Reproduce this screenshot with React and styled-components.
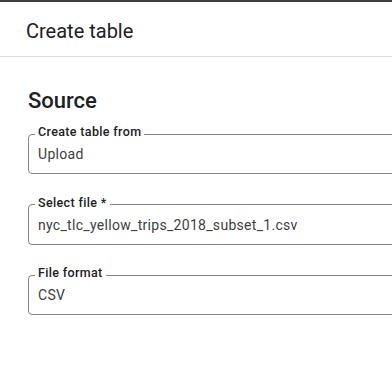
import React from "react";
import styled, { createGlobalStyle } from "styled-components";

const Global = createGlobalStyle`
  html, body { margin: 0; padding: 0; background: #fff; overflow: hidden; }
  body { font-family: Roboto, "Liberation Sans", Arial, sans-serif; }
`;

const Page = styled.div`
  width: 392px;
  height: 369px;
  border-top: 2px solid #3c4043;
  box-sizing: border-box;
  overflow: hidden;
`;

const Header = styled.header`
  padding: 17px 26px 13px;
  border-bottom: 1px solid #dadce0;
`;

const Title = styled.h1`
  margin: 0;
  font-size: 20px;
  line-height: 24px;
  font-weight: 400;
  color: #202124;
`;

const Body = styled.section`
  padding: 30px 0 0 28px;
`;

const SectionTitle = styled.h2`
  margin: 0 0 9px;
  font-size: 22px;
  line-height: 28px;
  font-weight: 500;
  color: #202124;
`;

const Fields = styled.div`
  display: flex;
  flex-direction: column;
  gap: 20.5px;
`;

const Field = styled.fieldset`
  margin: 0;
  width: 520px;
  box-sizing: border-box;
  padding: 0 9px 9px;
  border: 1px solid #80868b;
  border-radius: 4px;
`;

const Legend = styled.legend`
  margin-left: -3px;
  padding: 0 3px 4px;
  font-size: 12.5px;
  line-height: 16px;
  font-weight: 500;
  letter-spacing: 0.35px;
  color: #202124;
`;

const Value = styled.div`
  font-size: 14px;
  line-height: 20px;
  letter-spacing: 0.3px;
  color: #3c4043;
`;

const fields = [
  { label: "Create table from", value: "Upload" },
  { label: "Select file *", value: "nyc_tlc_yellow_trips_2018_subset_1.csv" },
  { label: "File format", value: "CSV" },
];

export default function App() {
  return (
    <>
      <Global />
      <Page>
        <Header>
          <Title>Create table</Title>
        </Header>
        <Body>
          <SectionTitle>Source</SectionTitle>
          <Fields>
            {fields.map((f) => (
              <Field key={f.label}>
                <Legend>{f.label}</Legend>
                <Value>{f.value}</Value>
              </Field>
            ))}
          </Fields>
        </Body>
      </Page>
    </>
  );
}
